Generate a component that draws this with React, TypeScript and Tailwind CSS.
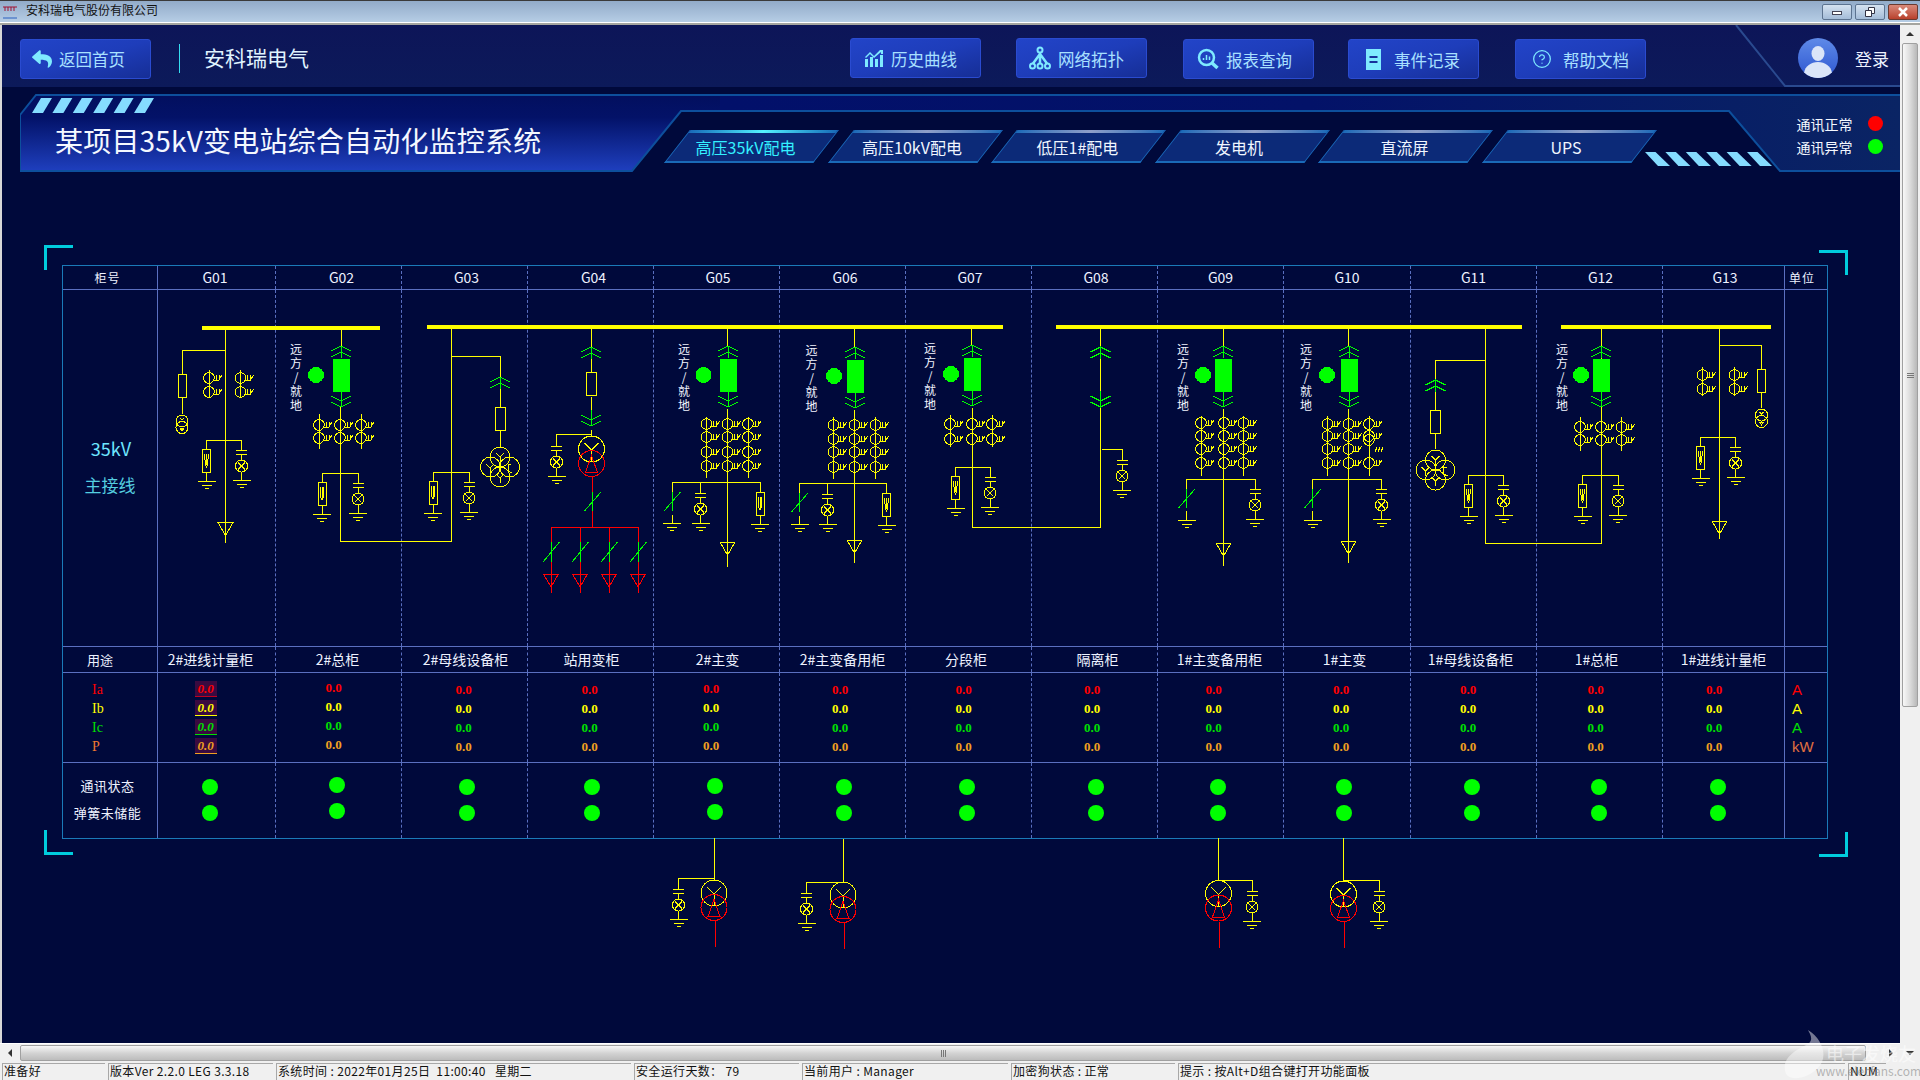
import React from 'react';
import { CircleHelp } from 'lucide-react';
import { FaReply } from 'react-icons/fa';

const GRID =
  'grid grid-cols-[95px_118px_126px_126px_126px_126px_126px_126px_126px_126px_127px_126px_126px_122px_42px]';

// one entry per cabinet, the *Cls values nudge the content as in the picture
const cabinets = [
  { id: 'G01', use: '2#进线计量柜', headCls: 'pr-[3px]', useCls: 'pr-[12px]', valCls: 'pr-[22px]', dotCls: 'pr-[14px]' },
  { id: 'G02', use: '2#总柜', headCls: 'pl-[6px]', useCls: 'pr-[2px]', valCls: 'pr-[10px]', dotCls: 'pr-[3px]' },
  { id: 'G03', use: '2#母线设备柜', headCls: 'pl-[4px]', useCls: 'pl-[2px]', valCls: 'pr-[2px]', dotCls: 'pl-[5px]' },
  { id: 'G04', use: '站用变柜', headCls: 'pl-[6px]', useCls: 'pl-[2px]', valCls: 'pr-[2px]', dotCls: 'pl-[2px]' },
  { id: 'G05', use: '2#主变', headCls: 'pl-[3px]', useCls: 'pl-[2px]', valCls: 'pr-[11px]', dotCls: 'pr-[3px]' },
  { id: 'G06', use: '2#主变备用柜', headCls: 'pl-[5px]', useCls: '', valCls: 'pr-[5px]', dotCls: 'pl-[2px]' },
  { id: 'G07', use: '分段柜', headCls: 'pl-[3px]', useCls: 'pr-[5px]', valCls: 'pr-[10px]', dotCls: 'pr-[3px]' },
  { id: 'G08', use: '隔离柜', headCls: 'pl-[3px]', useCls: 'pl-[6px]', valCls: 'pr-[5px]', dotCls: 'pl-[3px]' },
  { id: 'G09', use: '1#主变备用柜', headCls: '', useCls: 'pr-[2px]', valCls: 'pr-[14px]', dotCls: 'pr-[6px]' },
  { id: 'G10', use: '1#主变', headCls: '', useCls: 'pr-[5px]', valCls: 'pr-[12px]', dotCls: 'pr-[7px]' },
  { id: 'G11', use: '1#母线设备柜', headCls: '', useCls: 'pr-[6px]', valCls: 'pr-[11px]', dotCls: 'pr-[3px]' },
  { id: 'G12', use: '1#总柜', headCls: 'pl-[2px]', useCls: 'pr-[6px]', valCls: 'pr-[8px]', dotCls: 'pr-[2px]' },
  { id: 'G13', use: '1#进线计量柜', headCls: 'pl-[3px]', useCls: '', valCls: 'pr-[19px]', dotCls: 'pr-[11px]' },
];

const valueColors = ['text-[#ff0000]', 'text-[#ffff00]', 'text-[#00e000]', 'text-[#f0a020]'];
const underlineColors = ['border-[#c00020]', 'border-[#ffff00]', 'border-[#00e000]', 'border-[#f0a020]'];

const tabs = [
  { name: '高压35kV配电', cls: 'pr-[12px] text-[#33f0ff]', glow: 'via-[#55f5ff]' },
  { name: '高压10kV配电', cls: 'pr-[6px] text-[#f0f6ff]', glow: 'via-[#8f9fc8]' },
  { name: '低压1#配电', cls: 'pr-[2px] text-[#f0f6ff]', glow: 'via-[#8f9fc8]' },
  { name: '发电机', cls: 'pr-[6px] text-[#f0f6ff]', glow: 'via-[#8f9fc8]' },
  { name: '直流屏', cls: 'pr-[2px] text-[#f0f6ff]', glow: 'via-[#8f9fc8]' },
  { name: 'UPS', cls: 'pr-[6px] text-[#f0f6ff]', glow: 'via-[#8f9fc8]' },
];

const statusCells = [
  { text: '准备好', cls: 'w-[103px]' },
  { text: '版本Ver 2.2.0 LEG 3.3.18', cls: 'w-[165px]' },
  { text: '系统时间 : 2022年01月25日  11:00:40   星期二', cls: 'w-[355px]' },
  { text: '安全运行天数： 79', cls: 'w-[165px]' },
  { text: '当前用户 : Manager', cls: 'w-[206px]' },
  { text: '加密狗状态 : 正常', cls: 'w-[164px]' },
  { text: '提示 : 按Alt+D组合键打开功能面板', cls: 'w-[667px]' },
  { text: 'NUM', cls: 'w-[38px]' },
];

const Ground = ({ x, y }: { x: number; y: number }) => (
  <path d={`M${x - 9} ${y}H${x + 9}M${x - 5} ${y + 4}H${x + 5}M${x - 2} ${y + 7.5}H${x + 2}`} />
);

// current transformer: circle with the little winding tail
const Ct = ({ x, y }: { x: number; y: number }) => (
  <g>
    <circle cx={x} cy={y} r={5.3} />
    <path
      d={`M${x + 5} ${y + 2}H${x + 10}L${x + 13} ${y - 3}M${x + 7} ${y - 3}L${x + 7} ${y + 2}M${x + 10} ${y - 3}V${y + 2}`}
    />
  </g>
);

const CtGroup = ({ xs, ys, top, bottom }: { xs: number[]; ys: number[]; top: number; bottom: number }) => (
  <g>
    {xs.map((x, i) => (
      <g key={x}>
        {(xs.length === 2 || i !== 1) && <path d={`M${x} ${top}V${bottom}`} />}
        {ys.map((y) => (
          <Ct key={y} x={x} y={y} />
        ))}
      </g>
    ))}
  </g>
);

const ChevUp = ({ x, y, w = 10 }: { x: number; y: number; w?: number }) => (
  <path
    stroke="#00ff00"
    d={`M${x - w} ${y + 5}L${x} ${y}L${x + w} ${y + 5}M${x - w} ${y + 11}L${x} ${y + 6}L${x + w} ${y + 11}M${x} ${y}V${y + 12}`}
  />
);

const ChevDown = ({ x, y, w = 10 }: { x: number; y: number; w?: number }) => (
  <path
    stroke="#00ff00"
    d={`M${x - w} ${y - 5}L${x} ${y}L${x + w} ${y - 5}M${x - w} ${y + 1}L${x} ${y + 6}L${x + w} ${y + 1}M${x} ${y - 10}V${y + 6}`}
  />
);

const Fuse = ({ x, y, w = 8 }: { x: number; y: number; w?: number }) => (
  <rect x={x - w / 2} y={y} width={w} height={23} />
);

const Arrester = ({ x, y, groundY }: { x: number; y: number; groundY: number }) => (
  <g>
    <rect x={x - 4} y={y} width={8} height={23} />
    <path d={`M${x - 2} ${y + 5}L${x - 1} ${y + 16}L${x} ${y + 18}L${x + 1} ${y + 16}L${x + 2} ${y + 5}M${x} ${y + 5}V${y + 16}`} />
    <path d={`M${x} ${y + 23}V${groundY}`} />
    <Ground x={x} y={groundY} />
  </g>
);

const CapLamp = ({ x, y, top }: { x: number; y: number; top: number }) => (
  <g>
    <path d={`M${x} ${top}V${y}M${x - 5.5} ${y}H${x + 5.5}M${x - 5.5} ${y + 4}H${x + 5.5}M${x} ${y + 4}V${y + 10}`} />
    <circle cx={x} cy={y + 16} r={6} />
    <path d={`M${x - 3.5} ${y + 12.5}L${x + 3.5} ${y + 19.5}M${x + 3.5} ${y + 12.5}L${x - 3.5} ${y + 19.5}M${x} ${y + 22}V${y + 30}`} />
    <Ground x={x} y={y + 30} />
  </g>
);

const ArrCap = ({ l, r, y }: { l: number; r: number; y: number }) => (
  <g>
    <path d={`M${l} ${y + 9}V${y}H${r}`} />
    <Arrester x={l} y={y + 9} groundY={y + 41} />
    <CapLamp x={r} y={y + 10} top={y} />
  </g>
);

const Triangle = ({ x, y, color = '#ffff00' }: { x: number; y: number; color?: string }) => (
  <path stroke={color} d={`M${x - 7.5} ${y}H${x + 7.5}L${x} ${y + 13}Z`} />
);

const Slash = ({ x, y1, y2 }: { x: number; y1: number; y2: number }) => (
  <path stroke="#00ff00" d={`M${x} ${y1}V${y2}M${x - 8} ${y2}L${x + 8.5} ${y1}`} />
);

const Breaker = ({ x, y, dotX, textX }: { x: number; y: number; dotX: number; textX: number }) => (
  <g>
    <ChevUp x={x} y={y - 13} />
    <rect x={x - 8} y={y} width={16} height={32} fill="#00ff00" stroke="#00ff00" />
    <circle cx={dotX} cy={y + 16} r={8} fill="#00ff00" stroke="none" />
    <ChevDown x={x} y={y + 42} />
    {['远', '方', '/', '就', '地'].map((ch, i) => (
      <text key={ch} x={textX} y={y - 11 + i * 14} fill="#f2f4ff" stroke="none" fontSize={12} textAnchor="middle" dominantBaseline="central">
        {ch}
      </text>
    ))}
  </g>
);

const Transformer = ({ x, y1, y2 }: { x: number; y1: number; y2: number }) => (
  <g>
    <circle cx={x} cy={y1} r={13} />
    <path d={`M${x - 7} ${y1 - 6}L${x} ${y1 + 1}L${x + 7} ${y1 - 6}M${x} ${y1 + 1}V${y1 + 13}`} />
    <circle cx={x} cy={y2} r={13} stroke="#ff0000" />
    <path stroke="#ff0000" d={`M${x} ${y2 - 8}L${x - 6} ${y2 + 9}H${x + 6}Z`} />
  </g>
);

const QuadCoil = ({ x, y }: { x: number; y: number }) => (
  <g>
    <circle cx={x} cy={y - 10} r={10} />
    <circle cx={x - 9.5} cy={y} r={10} />
    <circle cx={x + 9.5} cy={y} r={10} />
    <circle cx={x} cy={y + 10} r={10} />
    <path
      d={`M${x - 4} ${y - 14}L${x} ${y - 10}L${x + 4} ${y - 14}M${x} ${y - 10}V${y}M${x - 4} ${y + 7}L${x} ${y + 11}L${x + 4} ${y + 7}M${x} ${y + 11}V${y + 16}M${x - 14} ${y - 3}L${x - 10} ${y + 1}L${x - 6} ${y - 3}M${x - 10} ${y + 1}V${y + 6}M${x + 8} ${y - 3}H${x + 11}M${x + 8} ${y - 3}V${y + 4}L${x + 12} ${y + 6}M${x - 5} ${y}H${x + 5}`}
    />
  </g>
);

const Pt = ({ x, y }: { x: number; y: number }) => (
  <g>
    <circle cx={x} cy={y} r={6} />
    <circle cx={x} cy={y + 6.5} r={6} />
    <path d={`M${x - 2} ${y - 3}L${x} ${y - 1}L${x + 2} ${y - 3}M${x - 2} ${y + 7}H${x + 2}L${x} ${y + 10}Z`} />
  </g>
);

const Diagram = () => (
  <svg
    className="absolute left-0 top-0 pointer-events-none"
    width={1920}
    height={1080}
    viewBox="0 0 1920 1080"
    fill="none"
    stroke="#ffff00"
    strokeWidth={1}
    shapeRendering="crispEdges"
  >
    {/* buses */}
    <g fill="#ffff00" stroke="none">
      <rect x={202} y={326} width={178} height={4} />
      <rect x={427} y={325} width={576} height={4} />
      <rect x={1056} y={325} width={466} height={4} />
      <rect x={1561} y={325} width={210} height={4} />
    </g>

    {/* G01 */}
    <path d="M225.5 330V543M225.5 350H182V374M182 397V414" />
    <Fuse x={182} y={374} />
    <Pt x={182} y={421} />
    <CtGroup xs={[209, 240.5]} ys={[378, 392]} top={370} bottom={398} />
    <ArrCap l={206.5} r={241.5} y={440} />
    <Triangle x={225.5} y={522.5} />

    {/* G02 + G03 tie */}
    <path d="M341 329V347M340.5 407V541H451V329M451 356H500V377M500 389V407M500 430V447" />
    <Breaker x={341} y={359} dotX={316} textX={296} />
    <CtGroup xs={[319, 340, 361]} ys={[425, 438]} top={414} bottom={449} />
    <ArrCap l={322} r={358} y={473} />
    <ChevUp x={500} y={377} />
    <Fuse x={500} y={407} w={10} />
    <QuadCoil x={500} y={467} />
    <ArrCap l={433} r={469} y={472} />

    {/* G04 */}
    <path d="M591 329V347M591 359V372M591 397V420M591 430V436M591 434H556.5V446" />
    <ChevUp x={591} y={347} />
    <Fuse x={591.5} y={372} w={10} />
    <ChevDown x={591} y={420} />
    <CapLamp x={556.5} y={446} top={434} />
    <Transformer x={591.5} y1={449} y2={463.5} />
    <path stroke="#ff0000" d="M592.5 477V527M551 527H638" />
    <Slash x={592.5} y1={492} y2={511} />
    {[551, 580, 609, 638].map((x) => (
      <g key={x}>
        <path stroke="#ff0000" d={`M${x} 527V593`} />
        <Slash x={x} y1={542} y2={562} />
        <Triangle x={x} y={574} color="#ff0000" />
      </g>
    ))}

    {/* G05 */}
    <path d="M727.5 329V347M727.5 409V567M672 511V482.5H760V492M672 515V523M700.5 482.5V493" />
    <Breaker x={728} y={359} dotX={703.5} textX={684} />
    <CtGroup xs={[706.5, 727.5, 748]} ys={[424, 437, 452, 466]} top={417} bottom={478} />
    <Slash x={672} y1={492} y2={511} />
    <Ground x={672} y={523} />
    <CapLamp x={700.5} y={493} top={482.5} />
    <Arrester x={760} y={492} groundY={524} />
    <Triangle x={727.5} y={542} />

    {/* G06 */}
    <path d="M854.5 329V347M854.5 410V563M799.5 512V483.5H886.5V493M799.5 516V524M827.5 483.5V494" />
    <Breaker x={855} y={360} dotX={834} textX={811.5} />
    <CtGroup xs={[833.5, 854.5, 875.5]} ys={[425, 439, 452, 467]} top={417} bottom={479} />
    <Slash x={799.5} y1={493} y2={512} />
    <Ground x={799.5} y={524} />
    <CapLamp x={827.5} y={494} top={483.5} />
    <Arrester x={886.5} y={493} groundY={525} />
    <Triangle x={854.5} y={540} />

    {/* G07 + G08 tie */}
    <path d="M971.5 329V346M972 408V527.5H1100.5V329" />
    <Breaker x={972} y={358} dotX={951} textX={930} />
    <CtGroup xs={[950, 972, 992]} ys={[424, 439]} top={415} bottom={447} />
    <ArrCap l={955.5} r={990} y={467} />
    <ChevUp x={1100.5} y={347} />
    <ChevDown x={1100.5} y={401} />
    <path d="M1102 449.5H1122V460" />
    <CapLamp x={1122} y={460} top={449.5} />

    {/* G09 */}
    <path d="M1223 329V347M1223.5 409V566M1186.5 508V479.5H1255V489M1186.5 511V520" />
    <Breaker x={1223} y={359} dotX={1203} textX={1183} />
    <CtGroup xs={[1201, 1224, 1243.5]} ys={[423, 436, 449, 463]} top={416} bottom={476} />
    <Slash x={1186.5} y1={489} y2={508} />
    <Ground x={1186.5} y={520} />
    <CapLamp x={1255} y={489} top={479.5} />
    <Triangle x={1223.5} y={543} />

    {/* G10 */}
    <path d="M1348.5 329V347M1348.5 409V563M1312.5 508V479.5H1381.5V489M1312.5 511V520" />
    <Breaker x={1349} y={359} dotX={1327} textX={1306} />
    <CtGroup xs={[1327.5, 1348.5]} ys={[424, 436, 449, 463]} top={416} bottom={476} />
    <path d="M1369 416V476" />
    <Ct x={1369} y={424} />
    <Ct x={1369} y={436} />
    <circle cx={1369} cy={440} r={5.3} />
    <Ct x={1369} y={463} />
    <path d="M1377 447L1375 452M1380 447L1378 452M1383 447L1381 452" />
    <Slash x={1312.5} y1={489} y2={508} />
    <Ground x={1312.5} y={520} />
    <CapLamp x={1381.5} y={489} top={479.5} />
    <Triangle x={1348.5} y={541} />

    {/* G11 + G12 tie */}
    <path d="M1485.5 329V543.5H1601V329M1485.5 360.5H1435.5V380M1435.5 392V410M1435.5 433V449" />
    <ChevUp x={1435.5} y={380} />
    <Fuse x={1435.5} y={410} w={10} />
    <QuadCoil x={1435.5} y={470} />
    <ArrCap l={1468.5} r={1503.5} y={475} />
    <Breaker x={1601} y={359} dotX={1581} textX={1562} />
    <CtGroup xs={[1580, 1601, 1621.5]} ys={[427, 440]} top={417} bottom={451} />
    <ArrCap l={1582.5} r={1618} y={475} />

    {/* G13 */}
    <path d="M1719.5 329V539M1719.5 345.5H1761.5V369M1761.5 392V408" />
    <Fuse x={1761.5} y={369} />
    <Pt x={1761.5} y={415} />
    <CtGroup xs={[1702.5, 1734.5]} ys={[375, 389]} top={367} bottom={396} />
    <ArrCap l={1700.5} r={1735.5} y={437} />
    <Triangle x={1719.5} y={521} />

    {/* transformers under the table */}
    <path d="M714.5 838V880M714.5 878.5H678.5V889" />
    <CapLamp x={678.5} y={889} top={878.5} />
    <Transformer x={714} y1={893} y2={907.5} />
    <path stroke="#ff0000" d="M715 921V947" />

    <path d="M843.5 839V882M843.5 882.5H806.5V893" />
    <CapLamp x={806.5} y={893} top={882.5} />
    <Transformer x={843} y1={895} y2={909.5} />
    <path stroke="#ff0000" d="M844 923V949" />

    <path d="M1218.5 838V881M1218.5 880.5H1252V891" />
    <CapLamp x={1252} y={891} top={880.5} />
    <Transformer x={1218.5} y1={893.5} y2={908} />
    <path stroke="#ff0000" d="M1219.5 922V948" />

    <path d="M1343.5 838V881M1343.5 880.5H1379V891" />
    <CapLamp x={1379} y={891} top={880.5} />
    <Transformer x={1343.5} y1={894} y2={908.5} />
    <path stroke="#ff0000" d="M1344 922V948" />
  </svg>
);

const Corner = ({ cls }: { cls: string }) => <div className={`absolute w-[29px] h-[25px] border-[#00ccdd] ${cls}`} />;

const TopButton = ({ icon, label, cls, gap }: { icon: React.ReactNode; label: string; cls: string; gap: string }) => (
  <div
    className={`flex items-center w-[131px] h-[40px] rounded-[3px] border border-[#2a4bd0] bg-linear-to-br from-[#2244c8] via-[#1e3dba] to-[#162e96] ${cls}`}
  >
    <span className={`flex items-center justify-center ${gap}`}>{icon}</span>
    <span className="pt-[2px] text-[16.5px] leading-none text-[#a8e0ff] whitespace-nowrap">{label}</span>
  </div>
);

const Header = () => (
  <div className="relative flex items-start h-[62px] bg-linear-to-b from-[#0d1558] to-[#0c1a5a]">
    <div className="mt-[14px] ml-[18px]">
      <div className="flex items-center w-[131px] h-[40px] rounded-[3px] border border-[#2a4bd0] bg-linear-to-br from-[#2244c8] via-[#1e3dba] to-[#162e96] pl-[10px]">
        <FaReply className="w-[22px] h-[20px] text-[#7feaff] mr-[6px]" />
        <span className="text-[16.5px] leading-none text-[#a8e0ff] whitespace-nowrap">返回首页</span>
      </div>
    </div>
    <div className="mt-[19px] ml-[28px] w-px h-[29px] bg-[#35dcf0]" />
    <div className="mt-[18px] ml-[24px] w-[106px] text-[21px] leading-[28px] text-[#e0f4ff] whitespace-nowrap">安科瑞电气</div>

    <div className="ml-[540px] mt-[13px] flex items-start">
      <TopButton
        cls=""
        gap="ml-[13px] mr-[7px] w-[20px]"
        label="历史曲线"
        icon={
          <svg width="20" height="20" viewBox="0 0 20 20" fill="#7feaff">
            <path d="M1 11h3v8H1zM6 9h3v10H6zM11 11h3v8h-3zM16 7h3v12h-3z" />
            <path d="M1 9l5-5 4 4 6-6h3v4h-2V4l-7 6-4-4-4 4z" />
          </svg>
        }
      />
      <TopButton
        cls="ml-[35px]"
        gap="ml-[12px] mr-[7px] w-[22px]"
        label="网络拓扑"
        icon={
          <svg width="22" height="24" viewBox="0 0 22 24" fill="none" stroke="#7feaff" strokeWidth="2">
            <circle cx="11" cy="4" r="2.5" />
            <circle cx="3.5" cy="20" r="2.5" />
            <circle cx="11" cy="20" r="2.5" />
            <circle cx="18.5" cy="20" r="2.5" />
            <path d="M11 6.5V17.5M11 8L4 17.5M11 8l7 9.5" strokeWidth="2.5" />
          </svg>
        }
      />
      <TopButton
        cls="ml-[36px] mt-[1px]"
        gap="ml-[13px] mr-[7px] w-[22px]"
        label="报表查询"
        icon={
          <svg width="22" height="22" viewBox="0 0 22 22" fill="none" stroke="#7feaff" strokeWidth="2.5">
            <circle cx="9.5" cy="9.5" r="7.5" />
            <path d="M15 15l5.5 5" strokeWidth="3.5" />
            <path d="M6.5 12v-2M9.5 12V7M12.5 12V8.5" strokeWidth="1.5" />
          </svg>
        }
      />
      <TopButton
        cls="ml-[34px] mt-[1px]"
        gap="ml-[17px] mr-[13px] w-[15px]"
        label="事件记录"
        icon={
          <svg width="15" height="21" viewBox="0 0 15 21" fill="#7feaff">
            <path d="M0 0h15v21H0z" />
            <path d="M3.5 7h8v2h-8zM3.5 12h8v2h-8z" fill="#17309c" />
          </svg>
        }
      />
      <TopButton
        cls="ml-[36px] mt-[1px]"
        gap="ml-[16px] mr-[11px] w-[20px]"
        label="帮助文档"
        icon={<CircleHelp className="w-[22px] h-[22px] text-[#7feaff]" strokeWidth={1.5} />}
      />
    </div>

    <div className="ml-[36px] mt-[13px] flex items-center">
      <div className="ml-[116px] w-[40px] h-[40px] shrink-0 rounded-full overflow-hidden bg-linear-to-b from-[#5f8ae8] to-[#2f55d0]">
        <svg width="40" height="40" viewBox="0 0 40 40" fill="#dbe5f8">
          <ellipse cx="20" cy="15.5" rx="6.5" ry="7.5" />
          <path d="M6 35c1-7 7-11 14-11s13 4 14 11c-3 4-8 5-14 5S9 39 6 35z" />
        </svg>
      </div>
      <span className="ml-[17px] text-[17px] leading-none text-[#eef2ff] whitespace-nowrap">登录</span>
    </div>

    {/* login corner line */}
    <svg className="absolute left-0 top-0 pointer-events-none" width="1898" height="62" fill="none" stroke="#2a4a8f" strokeWidth="2">
      <path d="M1734 0L1783 61H1898" />
    </svg>
  </div>
);

const Banner = () => (
  <div className="relative mt-[7px] ml-[18px] h-[78px] flex items-start">
    <svg className="absolute left-0 top-0" width="1880" height="78" viewBox="0 0 1880 78">
      <defs>
        <linearGradient id="bannerLeft" gradientUnits="userSpaceOnUse" x1="0" y1="0" x2="0" y2="78">
          <stop offset="0" stopColor="#020f5e" />
          <stop offset="0.3" stopColor="#031268" />
          <stop offset="1" stopColor="#1f40c0" />
        </linearGradient>
        <linearGradient id="bannerRight" gradientUnits="userSpaceOnUse" x1="700" y1="0" x2="1880" y2="0">
          <stop offset="0" stopColor="#02106a" />
          <stop offset="0.5" stopColor="#031268" />
          <stop offset="1" stopColor="#0a2464" />
        </linearGradient>
      </defs>
      <path d="M16 1H700V17H661L612 77H0V21Z" fill="url(#bannerLeft)" />
      <path d="M700 1H1880V77H1760L1709 17H700Z" fill="url(#bannerRight)" />
      <path
        d="M1880 1H16L0 21V77H612L661 17H1709L1760 77H1880"
        fill="none"
        stroke="#0d4f9c"
        strokeWidth="2"
      />
      <g fill="#85dcff">
        {[0, 1, 2, 3, 4, 5].map((i) => (
          <path key={i} d={`M${12 + i * 20.4} 19l9-15h11l-9 15z`} />
        ))}
        {[0, 1, 2, 3, 4, 5].map((i) => (
          <path key={i} d={`M${1625 + i * 20.4} 58h10.5l14.5 14h-12z`} />
        ))}
      </g>
    </svg>

    <div className="relative w-[657px] pl-[35px] pt-[26px] text-[28px] leading-[40px] tracking-[0.2px] text-[#f4f8ff] whitespace-nowrap">
      某项目35kV变电站综合自动化监控系统
    </div>

    <div className="relative mt-[36px] flex gap-[14.5px]">
      {tabs.map((tab) => (
        <div key={tab.name} className="relative w-[149px] h-[33px] flex items-center justify-center">
          <div className="absolute inset-0 skew-x-[-38deg] bg-[#0c2a78] border border-t-0 border-b-2 border-[#1a6ab8]">
            <div className={`h-[3px] bg-linear-to-r from-[#1a6ab8] to-[#1a6ab8] ${tab.glow}`} />
          </div>
          <span className={`relative text-[16px] leading-none whitespace-nowrap ${tab.cls}`}>{tab.name}</span>
        </div>
      ))}
    </div>

    <div className="relative ml-[153px] mt-[20px] flex flex-col gap-[4px] text-[14px] leading-[17px] text-[#f4f8ff]">
      <div className="flex items-center">
        <span className="w-[56px] pt-[2px] whitespace-nowrap">通讯正常</span>
        <span className="ml-[15px] w-[15px] h-[15px] rounded-full bg-[#ff0000]" />
      </div>
      <div className="flex items-center">
        <span className="w-[56px] pt-[2px] whitespace-nowrap">通讯异常</span>
        <span className="ml-[15px] w-[15px] h-[15px] rounded-full bg-[#00ff00]" />
      </div>
    </div>
  </div>
);

const MonitorTable = () => (
  <div className="mt-[93px] ml-[60px] w-[1766px] border border-[#1a7ab8] text-[#eef2ff]">
    {/* cabinet numbers */}
    <div className={`${GRID} h-[24px] border-b border-[#5a6fc0]`}>
      <div className="border-r border-[#5a6fc0] flex items-center justify-center pr-[5px] text-[12px] tracking-[1px]">柜号</div>
      {cabinets.map((c, i) => (
        <div
          key={c.id}
          className={`flex items-center justify-center text-[14px] ${c.headCls} border-r ${i === 12 ? 'border-[#5a6fc0]' : 'border-dashed border-[#5a6fc0]'}`}
        >
          {c.id}
        </div>
      ))}
      <div className="flex items-center justify-center pr-[8px] text-[12px] tracking-[1px]">单位</div>
    </div>

    {/* one-line diagram row, the drawing itself lies over these cells */}
    <div className={`${GRID} h-[357px] border-b border-[#5a6fc0]`}>
      <div className="border-r border-[#5a6fc0] flex flex-col items-center pt-[145px]">
        <span className="pl-[2px] text-[18px] leading-[26px] text-[#6ee6ff]">35kV</span>
        <span className="mt-[11px] text-[17px] leading-[26px] text-[#55cfe0]">主接线</span>
      </div>
      {cabinets.map((c, i) => (
        <div key={c.id} className={`border-r ${i === 12 ? 'border-[#5a6fc0]' : 'border-dashed border-[#5a6fc0]'}`} />
      ))}
      <div />
    </div>

    {/* use */}
    <div className={`${GRID} h-[26px] border-b border-[#5a6fc0]`}>
      <div className="border-r border-[#5a6fc0] flex items-center justify-center pr-[20px] text-[13px]">用途</div>
      {cabinets.map((c, i) => (
        <div
          key={c.id}
          className={`flex items-center justify-center text-[14px] whitespace-nowrap ${c.useCls} border-r ${i === 12 ? 'border-[#5a6fc0]' : 'border-dashed border-[#5a6fc0]'}`}
        >
          {c.use}
        </div>
      ))}
      <div />
    </div>

    {/* measurements */}
    <div className={`${GRID} h-[90px] border-b border-[#5a6fc0]`}>
      <div className="border-r border-[#5a6fc0] pl-[29px] pt-[7px] font-['Liberation_Serif',serif] text-[14px] leading-[19px]">
        <div className="text-[#ff0000]">Ia</div>
        <div className="text-[#ffff00]">Ib</div>
        <div className="text-[#00e000]">Ic</div>
        <div className="text-[#f07830]">P</div>
      </div>
      {cabinets.map((c, i) => (
        <div
          key={c.id}
          className={`flex flex-col items-center ${i === 1 ? 'pt-[5px]' : i === 4 ? 'pt-[6px]' : 'pt-[7px]'} ${c.valCls} font-['Liberation_Serif',serif] font-bold text-[13px] leading-[19px] border-r ${i === 12 ? 'border-[#5a6fc0]' : 'border-dashed border-[#5a6fc0]'}`}
        >
          {valueColors.map((color, j) =>
            i === 0 ? (
              <div key={color} className="h-[19px] flex items-start">
                <span className={`w-[22px] h-[16px] mt-[1px] bg-[#3a0a40] border-b italic leading-[16px] text-center ${color} ${underlineColors[j]}`}>
                  0.0
                </span>
              </div>
            ) : (
              <span key={color} className={color}>
                0.0
              </span>
            ),
          )}
        </div>
      ))}
      <div className="pl-[7px] pt-[7px] font-['Liberation_Sans',sans-serif] text-[15px] leading-[19px]">
        <div className="text-[#ff0000]">A</div>
        <div className="text-[#ffff00]">A</div>
        <div className="text-[#00e000]">A</div>
        <div className="text-[#e07040]">kW</div>
      </div>
    </div>

    {/* comms and spring state */}
    <div className={`${GRID} h-[75px]`}>
      <div className="border-r border-[#5a6fc0] pt-[9px] flex flex-col items-center pr-[5px] text-[13px] leading-[27px] tracking-[0.5px]">
        <span>通讯状态</span>
        <span>弹簧未储能</span>
      </div>
      {cabinets.map((c, i) => (
        <div
          key={c.id}
          className={`flex flex-col items-center gap-[10px] ${i === 1 ? 'pt-[14px]' : i === 4 ? 'pt-[15px]' : 'pt-[16px]'} ${c.dotCls} border-r ${i === 12 ? 'border-[#5a6fc0]' : 'border-dashed border-[#5a6fc0]'}`}
        >
          <span className="w-[16px] h-[16px] rounded-full bg-[#00ff00]" />
          <span className="w-[16px] h-[16px] rounded-full bg-[#00ff00]" />
        </div>
      ))}
      <div />
    </div>
  </div>
);

const TitleBar = () => (
  <div className="h-[25px] flex flex-col shrink-0">
    <div className="h-[22px] flex items-center border-t border-[#3a3a3a] bg-linear-to-b from-[#92abc9] to-[#b6cde5]">
      <svg className="ml-[2px]" width="16" height="16" viewBox="0 0 16 16" fill="none">
        <path d="M1 3H15M3 3V7M6 3V7M9 3V7M12 3V7" stroke="#a01030" strokeWidth="1" />
        <path d="M1 14H15" stroke="#2a60c0" strokeWidth="1" />
      </svg>
      <span className="ml-[8px] mb-[3px] text-[12px] leading-none text-[#111]">安科瑞电气股份有限公司</span>
      <div className="ml-auto mr-[2px] flex gap-[3px]">
        <div className="w-[30px] h-[16px] rounded-[2px] border border-[#5c7390] bg-linear-to-b from-[#d5e2f0] to-[#a4bcd8] flex items-center justify-center">
          <div className="w-[10px] h-[4px] mt-[3px] bg-white border border-[#445]" />
        </div>
        <div className="w-[30px] h-[16px] rounded-[2px] border border-[#5c7390] bg-linear-to-b from-[#d5e2f0] to-[#a4bcd8] flex items-center justify-center">
          <svg width="12" height="12" viewBox="0 0 12 12" fill="#fff" stroke="#334">
            <path d="M4.5 1.5h6v6h-6z" />
            <path d="M1.5 4.5h6v6h-6z" />
          </svg>
        </div>
        <div className="w-[30px] h-[16px] rounded-[2px] border border-[#6a3a30] bg-linear-to-b from-[#d9897a] to-[#b8402c] flex items-center justify-center">
          <svg width="12" height="10" viewBox="0 0 12 10" stroke="#fff" strokeWidth="2.5">
            <path d="M2 1l8 8M10 1L2 9" />
          </svg>
        </div>
      </div>
    </div>
    <div className="h-px bg-white" />
    <div className="h-[2px] bg-[#a5a5a0]" />
  </div>
);

const VerticalScroll = () => (
  <div className="w-[20px] shrink-0 bg-[#f0f0f0] flex flex-col items-center relative">
    <div className="h-[18px] flex items-center justify-center">
      <div className="w-0 h-0 border-x-[4px] border-x-transparent border-b-[4px] border-b-[#333]" />
    </div>
    <div className="w-[16px] h-[664px] rounded-[2px] border border-[#a0a0a0] bg-linear-to-r from-[#f8f8f8] via-[#dcdcdc] to-[#b8b8b8] flex flex-col items-center justify-center gap-px">
      <div className="w-[7px] h-px bg-[#777]" />
      <div className="w-[7px] h-px bg-[#777]" />
      <div className="w-[7px] h-px bg-[#777]" />
    </div>
    <div className="mt-auto h-[18px] flex items-center justify-center">
      <div className="w-0 h-0 border-x-[4px] border-x-transparent border-t-[4px] border-t-[#333]" />
    </div>
  </div>
);

const HorizontalScroll = () => (
  <div className="h-[19px] shrink-0 border-t border-white bg-[#f0f0f0] flex items-center">
    <div className="w-[20px] flex items-center justify-center">
      <div className="w-0 h-0 border-y-[4px] border-y-transparent border-r-[4px] border-r-[#333]" />
    </div>
    <div className="w-[1846px] h-[16px] rounded-[2px] border border-[#a0a0a0] bg-linear-to-b from-[#f8f8f8] via-[#d4d4d4] to-[#bcbcbc] flex items-center justify-center gap-px">
      <div className="w-px h-[7px] bg-[#777]" />
      <div className="w-px h-[7px] bg-[#777]" />
      <div className="w-px h-[7px] bg-[#777]" />
    </div>
    <div className="ml-auto w-[18px] flex items-center justify-center">
      <div className="w-0 h-0 border-y-[4px] border-y-transparent border-l-[4px] border-l-[#333]" />
    </div>
  </div>
);

const StatusBar = () => (
  <div className="h-[18px] shrink-0 bg-[#f0f0f0] flex gap-[3px] pl-[2px] pt-[1px]">
    {statusCells.map((cell) => (
      <div
        key={cell.text}
        className={`${cell.cls} h-[17px] pl-px border-l border-t border-[#a8a8a8] text-[12px] leading-[14px] tracking-[0.35px] text-[#111] whitespace-pre`}
      >
        {cell.text}
      </div>
    ))}
  </div>
);

export default function App() {
  return (
    <div className="relative w-[1920px] h-[1080px] overflow-hidden flex flex-col bg-[#00093b] font-['Noto_Sans_CJK_SC','Noto_Sans',sans-serif]">
      <TitleBar />
      <div className="flex flex-1 min-h-0">
        <div className="flex flex-col flex-1 min-w-0">
          <div className="flex-1 border-l-2 border-[#d8d8d8] flex flex-col min-h-0">
            <Header />
            <Banner />
            <MonitorTable />
          </div>
          <HorizontalScroll />
        </div>
        <VerticalScroll />
      </div>
      <StatusBar />

      <Diagram />

      <Corner cls="left-[44px] top-[245px] border-l-[3px] border-t-[3px]" />
      <Corner cls="left-[44px] top-[830px] border-l-[3px] border-b-[3px]" />
      <Corner cls="left-[1819px] top-[250px] border-r-[3px] border-t-[3px]" />
      <Corner cls="left-[1819px] top-[832px] border-r-[3px] border-b-[3px]" />

      {/* site watermark */}
      <div className="absolute left-[1780px] top-[1030px] w-[140px] h-[50px] pointer-events-none">
        <svg className="absolute left-0 top-0" width="60" height="50" viewBox="0 0 60 50" fill="#ffffff" fillOpacity="0.45">
          <path d="M6 44C0 28 16 20 28 14C34 10 30 4 28 0C44 10 48 28 38 38C28 48 12 52 6 44Z" />
        </svg>
        <span className="absolute left-[46px] top-[14px] text-[18px] leading-none whitespace-nowrap text-white/55">电子发烧友</span>
        <span className="absolute left-[36px] top-[35px] text-[12px] leading-none whitespace-nowrap text-[#888]/60">www.elecfans.com</span>
      </div>
    </div>
  );
}
